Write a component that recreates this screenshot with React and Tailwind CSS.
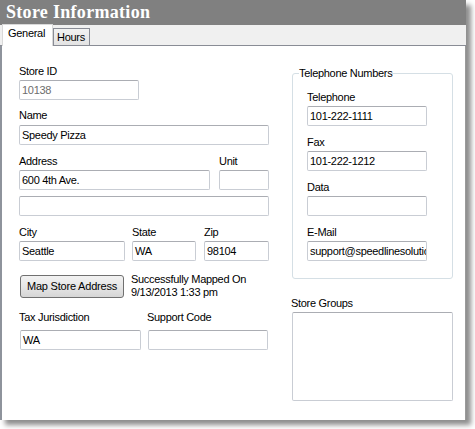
const ui = { fontFamily: '"Liberation Sans", Arial, sans-serif' };

function Label({ children, className = "" }) {
  return <div className={`h-[14px] whitespace-nowrap text-[11px] leading-[14px] tracking-[-0.3px] text-black ${className}`}>{children}</div>;
}

function Box({ value = "", disabled = false, className = "" }) {
  return (
    <div
      className={`h-[20px] overflow-hidden whitespace-nowrap rounded-[2px] border border-[#c9cdd4] border-t-[#abadb3] bg-white pl-[2px] text-[11px] leading-[18px] tracking-[-0.3px] ${disabled ? "text-[#6d6d6d]" : "text-black"} ${className}`}
    >
      {value}
    </div>
  );
}

export default function App() {
  return (
    <div className="h-[429px] w-[475px] bg-white" style={ui}>
      <div className="flex h-[420px] w-[466px] flex-col bg-white shadow-[5px_5px_5px_rgba(0,0,0,0.45)]">
        <div className="h-[25px] bg-[#808080] pl-[6px] text-[18px] font-bold leading-[25px] tracking-[0.3px] text-white" style={{ fontFamily: '"Liberation Serif", "Times New Roman", serif' }}>
          Store Information
        </div>

        <div className="flex h-[21px] items-end border-b border-[#898c95] bg-[#f0f0f0] pl-[2px]">
          <div className="relative z-10 -mb-px h-[22px] w-[51px] border-x border-t border-[#d9d9d9] bg-white pl-[5px] text-[11px] leading-[16px] tracking-[-0.3px]">
            General
          </div>
          <div className="h-[17px] w-[37px] border-x border-t border-[#898c95] bg-gradient-to-b from-[#f2f2f2] to-[#e3e3e3] pl-[3px] text-[11px] leading-[16px] tracking-[-0.3px]">
            Hours
          </div>
        </div>

        <div className="flex flex-1 border-l-2 border-r border-l-[#8e939c] border-r-[#9a9a9a]">
          <div className="ml-[17px] w-[250px] pt-[18px]">
            <Label>Store ID</Label>
            <Box value="10138" disabled className="mt-[2px] w-[120px]" />

            <Label className="mt-[8px]">Name</Label>
            <Box value="Speedy Pizza" className="mt-[3px]" />

            <div className="mt-[9px] flex gap-[9px]">
              <div className="w-[191px]">
                <Label>Address</Label>
                <Box value="600 4th Ave." className="mt-[2px]" />
              </div>
              <div className="flex-1">
                <Label>Unit</Label>
                <Box className="mt-[2px]" />
              </div>
            </div>
            <Box className="mt-[6px]" />

            <div className="mt-[9px] flex gap-[7px]">
              <div className="w-[106px]">
                <Label>City</Label>
                <Box value="Seattle" className="mt-[2px]" />
              </div>
              <div className="w-[64px]">
                <Label>State</Label>
                <Box value="WA" className="mt-[2px]" />
              </div>
              <div className="ml-[1px] flex-1">
                <Label>Zip</Label>
                <Box value="98104" className="mt-[2px]" />
              </div>
            </div>

            <div className="mt-[14px] flex items-start gap-[7px]">
              <button className="ml-[1px] h-[23px] w-[104px] rounded-[3px] border border-[#707070] bg-gradient-to-b from-[#f2f2f2] via-[#e6e6e6] to-[#d6d6d6] text-[11px] tracking-[-0.2px] text-black">
                Map Store Address
              </button>
              <div className="mt-[-2px] text-[11px] leading-[13px] tracking-[-0.3px]">
                <div>Successfully Mapped On</div>
                <div>9/13/2013 1:33 pm</div>
              </div>
            </div>

            <div className="mt-[11px] flex gap-[6px]">
              <div className="w-[122px]">
                <Label>Tax Jurisdiction</Label>
                <Box value="WA" className="ml-[1px] mt-[6px]" />
              </div>
              <div className="flex-1">
                <Label>Support Code</Label>
                <Box className="ml-[1px] mt-[6px] w-[120px]" />
              </div>
            </div>
          </div>

          <div className="ml-[22px] w-[162px] pt-[20px]">
            <fieldset className="ml-[1px] w-[161px] rounded-[3px] border border-[#d5dfe5]">
              <legend className="ml-[6px] whitespace-nowrap text-[11px] leading-[14px] tracking-[-0.3px]">Telephone Numbers</legend>
              <div className="pb-[17px] pl-[14px]">
                <Label className="mt-[10px]">Telephone</Label>
                <Box value="101-222-1111" className="mt-[2px] w-[120px]" />
                <Label className="mt-[9px]">Fax</Label>
                <Box value="101-222-1212" className="mt-[2px] w-[120px]" />
                <Label className="mt-[9px]">Data</Label>
                <Box className="mt-[2px] w-[120px]" />
                <Label className="mt-[9px]">E-Mail</Label>
                <Box value="support@speedlinesolutions.com" className="mt-[2px] w-[120px]" />
              </div>
            </fieldset>

            <Label className="mt-[17px]">Store Groups</Label>
            <div className="ml-[1px] mt-[2px] h-[89px] w-[161px] rounded-[2px] border border-[#c9cdd4] border-t-[#abadb3]" />
          </div>
        </div>
      </div>
    </div>
  );
}
